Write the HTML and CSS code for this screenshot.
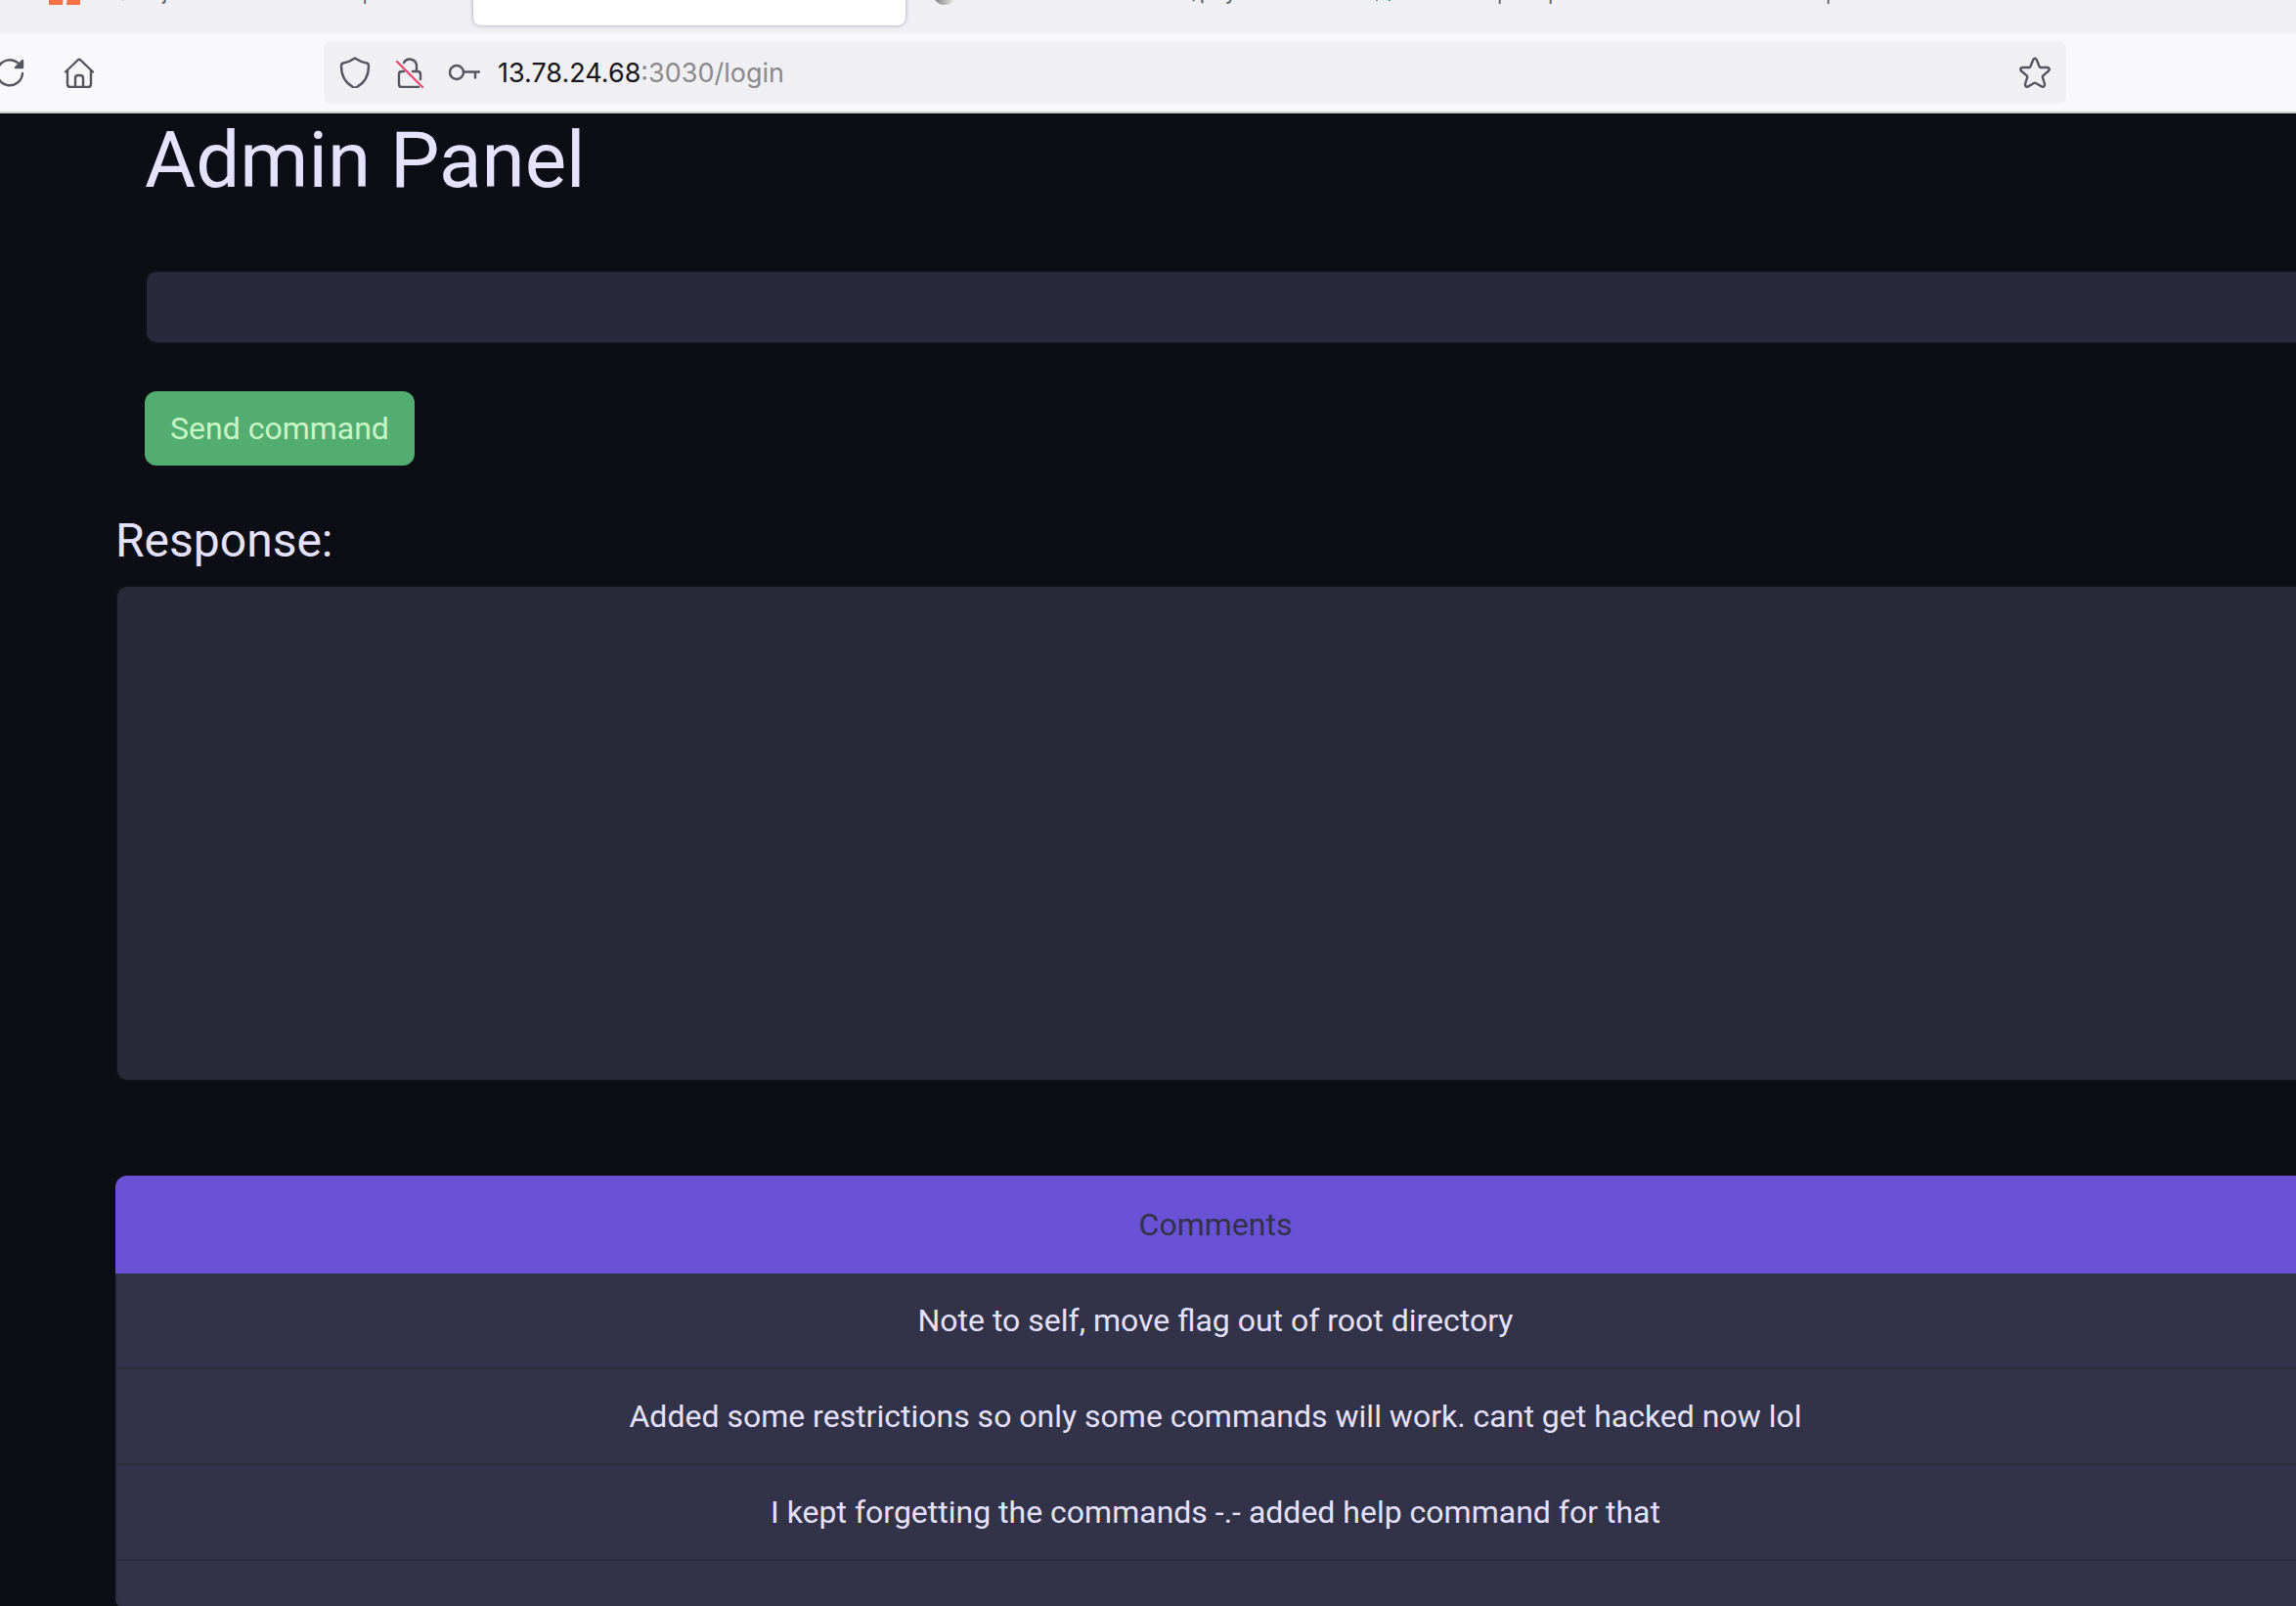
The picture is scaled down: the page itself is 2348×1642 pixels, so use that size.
FILE: index.html
```html
<!DOCTYPE html>
<html lang="en">
<head>
<meta charset="utf-8">
<title>Admin Panel</title>
<link rel="stylesheet" href="styles.css">
</head>
<body>
<header class="browser">
  <nav class="tabs" aria-label="Tabs">
    <a class="tab tab-first" href="#sql">
      <svg class="favicon favicon-wide" viewBox="0 0 32 28" aria-hidden="true"><path fill="#f47244" d="M0 0h17l-3 28H0zM20 17h-1l-1 11h14V0H20z"/></svg>
      <span class="tab-title">SQL injection cheat sheet | Web</span>
    </a>
    <a class="tab tab-active" href="#login"><span class="tab-title">Server-rendered Service</span></a>
    <a class="tab" href="#files">
      <svg class="favicon" viewBox="0 0 24 28" aria-hidden="true"><defs><linearGradient id="globe"><stop offset="0" stop-color="#777774"/><stop offset="1" stop-color="#f4f4f4"/></linearGradient></defs><circle cx="12" cy="16" r="12" fill="url(#globe)"/></svg>
      <span class="tab-title">HackTricks resources/payload-list</span>
    </a>
    <a class="tab" href="#shell">
      <svg class="favicon" viewBox="0 0 24 28" aria-hidden="true"><path fill="none" stroke="#3aa088" stroke-width="2" d="M8 24V4M21 24V4"/></svg>
      <span class="tab-title">Reverse | cat | nc</span>
    </a>
    <a class="tab tab-last" href="#notes"><span class="tab-title">|</span></a>
  </nav>
  <div class="toolbar">
    <div class="nav-buttons">
      <button class="icon-button reload" type="button" aria-label="Reload">
        <svg class="icon" viewBox="0 0 32 32"><path d="M30 17A13 13 0 1 1 25 6"/><path class="solid" d="M30 4v7h-7z"/></svg>
      </button>
      <button class="icon-button" type="button" aria-label="Home">
        <svg class="icon" viewBox="0 0 32 32"><path d="M2 15.500 14.500 3.500Q16 2 17.500 3.500L30 15.500M4 14v14q0 3 3 3h18q3 0 3-3V14M12 31V22q0-3 3-3h2q3 0 3 3v9"/></svg>
      </button>
    </div>
    <div class="address">
      <div class="site-icons">
        <svg class="icon" viewBox="0 0 32 32"><path d="M16 1.500Q22 5.500 28 6.500 30 7 30 9.500C30 20 26 26.500 18 31Q16 32 14 31C6 26.500 2 20 2 9.500Q2 7 4 6.500 10 5.500 16 1.500Z"/></svg>
        <svg class="icon" viewBox="0 0 32 32"><path d="M10 6A7 7 0 0 1 23 9V15M10 15H8q-3 0-3 3v10q0 3 3 3h17M19 15h5q3 0 3 3v5"/><path class="slash" d="M3 5 29 31"/></svg>
        <svg class="icon" viewBox="0 0 32 32"><circle cx="8" cy="16" r="7"/><path d="M15 15.500h16M27 15.500v6"/></svg>
      </div>
      <span class="url"><span class="host">13.78.24.68</span>:3030/login</span>
      <button class="icon-button" type="button" aria-label="Bookmark this page">
        <svg class="icon" viewBox="0 0 32 32"><path d="M14 3.500Q16 0 18 3.500L20.500 10Q20.800 11 22 11H29Q32 12 30 14.500L24.500 19.200Q23.500 20 24 21.500L26 28Q26 31.500 23 30.500L17 27Q16 26.300 15 27L9 30.500Q6 31.500 6 28L8 21.500Q8.500 20 7.500 19.200L2 14.500Q0 12 3 11H10Q11.200 11 11.500 10Z"/></svg>
      </button>
    </div>
  </div>
</header>
<main class="page">
  <div class="container">
    <form class="command-form">
      <h1 class="title">Admin Panel</h1>
      <input class="field" type="text" aria-label="Command">
      <button class="send" type="button">Send command</button>
    </form>
    <label class="response-label" for="response">Response:</label>
    <textarea class="field response" id="response" readonly></textarea>
    <section class="card">
      <h2 class="card-header">Comments</h2>
      <ul class="comments">
        <li class="comment">Note to self, move flag out of root directory</li>
        <li class="comment">Added some restrictions so only some commands will work. cant get hacked now lol</li>
        <li class="comment">I kept forgetting the commands -.- added help command for that</li>
        <li class="comment"></li>
      </ul>
    </section>
  </div>
</main>
</body>
</html>
```
FILE: styles.css
```css
* {
  box-sizing: border-box;
}

html {
  scrollbar-width: none;
}

body {
  margin: 0;
  background: #0d0d15;
  color: #e4e2ff;
  font-family: Roboto, sans-serif;
  font-size: 32px;
  line-height: 48px;
}

.browser {
  background: #f9f9fb;
  border-bottom: 2px solid #ccc;
  font-family: Inter, sans-serif;
}

.tabs {
  display: flex;
  align-items: flex-end;
  height: 34px;
  padding: 0 0 8px 38px;
  overflow: hidden;
  background: #f0eff4;
}

.tab {
  display: flex;
  align-items: center;
  flex: none;
  gap: 16px;
  width: 446px;
  height: 70px;
  padding: 0 28px;
  border-radius: 8px;
  color: #5b5b66;
  font-size: 22px;
  line-height: 28px;
  text-decoration: none;
  white-space: nowrap;
}

.tab-first {
  padding: 0 12px;
}

.tab-active {
  width: 442px;
  padding: 0 32px;
  background: #fff;
  box-shadow: 0 0 4px #a0a0b4;
}

.tab-last {
  width: 100px;
  padding: 0 48px;
}

.favicon {
  flex: none;
  width: 24px;
  height: 28px;
}

.favicon-wide {
  width: 32px;
}

.toolbar {
  display: flex;
  align-items: center;
  height: 80px;
  padding-right: 235px;
}

.nav-buttons {
  display: flex;
  gap: 40px;
  width: 331px;
}

.icon-button {
  display: flex;
  padding: 0;
  border: 0;
  background: none;
}

.reload {
  margin-left: -7px;
}

.icon {
  flex: none;
  width: 32px;
  height: 32px;
  fill: none;
  stroke: #55555f;
  stroke-width: 2.4;
  stroke-linecap: round;
  stroke-linejoin: round;
}

.solid {
  fill: #55555f;
}

.icon .slash {
  stroke: #e8506e;
}

.address {
  display: flex;
  flex: 1;
  align-items: center;
  gap: 18px;
  height: 64px;
  padding: 0 16px;
  border-radius: 8px;
  background: #f0eff4;
}

.site-icons {
  display: flex;
  gap: 24px;
}

.url {
  flex: 1;
  padding-top: 2px;
  color: #8a898e;
  font-size: 27px;
  line-height: 36px;
}

.host {
  color: #15141a;
}

.page {
  overflow-x: clip;
}

.container {
  margin: 0 -20px 0 118px;
}

.command-form {
  padding-left: 30px;
}

.title {
  margin: 0 0 64px;
  font-size: 80px;
  font-weight: 400;
  line-height: 96px;
}

.field {
  display: block;
  width: 100%;
  height: 76px;
  padding: 12px 24px;
  border: 2px solid #11111a;
  border-radius: 12px;
  outline: none;
  background: #29293d;
  color: #e4e2ff;
  font: inherit;
}

.send {
  display: block;
  height: 76px;
  margin: 48px 0 0;
  padding: 0 26px;
  border: 0;
  border-radius: 12px;
  background: #53ad70;
  color: #c8f7c5;
  font: inherit;
}

.response-label {
  display: block;
  margin: 48px 0 16px;
  font-size: 48px;
  line-height: 58px;
}

.response {
  height: 508px;
  resize: none;
  background: #292a37;
}

.card {
  margin-top: 96px;
  border-radius: 12px;
  overflow: hidden;
  background: #323248;
  text-align: center;
}

.card-header {
  margin: 0;
  padding: 26px;
  background: #6952d5;
  color: #323248;
  font-size: 32px;
  font-weight: 400;
  line-height: 48px;
}

.comments {
  margin: 0;
  padding: 0;
  border: 2px solid #2e2e40;
  border-top: 0;
  border-radius: 0 0 12px 12px;
  list-style: none;
}

.comment {
  padding: 24px;
  border-bottom: 2px solid #2b2b3b;
}

.comment:last-child {
  border-bottom: 0;
}
```
